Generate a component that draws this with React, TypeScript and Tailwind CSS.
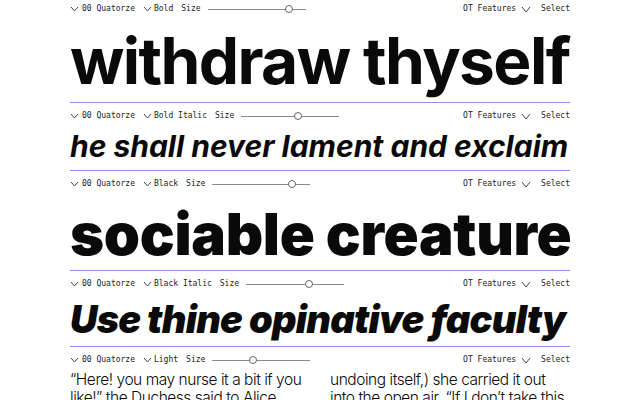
import React from "react";

const mono = { fontFamily: '"DejaVu Sans Mono", "Liberation Mono", monospace' };

function Chevron({ w = 7, h = 4 }: { w?: number; h?: number }) {
  return (
    <svg width={w + 2} height={h + 2} viewBox={`0 0 ${w + 2} ${h + 2}`} className="block">
      <path d={`M1 1 L${(w + 2) / 2} ${h + 1} L${w + 1} 1`} fill="none" stroke="#444" strokeWidth="1" />
    </svg>
  );
}

function Slider({ pos }: { pos: number }) {
  return (
    <div className="relative w-[98px] h-[10px] flex items-center">
      <div className="w-full h-px bg-[#8a8a8a]" />
      <div
        className="absolute top-[1px] w-[8px] h-[8px] rounded-full bg-white border border-[#666]"
        style={{ left: `${pos * 98 - 4}px` }}
      />
    </div>
  );
}

function Toolbar({ style, pos, first }: { style: string; pos: number; first?: boolean }) {
  return (
    <div
      className={`flex items-center justify-between h-[12px] text-[8px] text-[#222] ${first ? "mt-[3px]" : "mt-[7px]"}`}
      style={mono}
    >
      <div className="flex items-center">
        <Chevron />
        <span className="ml-[3px]">00 Quatorze</span>
        <span className="ml-[8px]"><Chevron /></span>
        <span className="ml-[2px]">{style}</span>
        <span className="ml-[8px]">Size</span>
        <span className="ml-[7px]"><Slider pos={pos} /></span>
      </div>
      <div className="flex items-center">
        <span>OT Features</span>
        <span className="ml-[5px]"><Chevron w={8} h={5} /></span>
        <span className="ml-[10px]">Select</span>
      </div>
    </div>
  );
}

function Rule() {
  return <div className="h-px bg-[#9a8de3]" />;
}

const head = { fontFamily: 'Inter, "Noto Sans", sans-serif' };

export default function App() {
  return (
    <div className="w-[640px] h-[400px] overflow-hidden bg-white text-[#0a0a0a]">
      <div className="ml-[70px] w-[500px]">
        <section>
          <Toolbar style="Bold" pos={0.83} first />
          <div
            className="h-[87px] pt-[14px] text-[64px] leading-[64px] font-bold tracking-[-0.025em] whitespace-nowrap"
            style={head}
          >
            withdraw thyself
          </div>
        </section>
        <Rule />
        <section>
          <Toolbar style="Bold Italic" pos={0.58} />
          <div
            className="h-[48px] pt-[9px] text-[30px] leading-[30px] font-bold italic whitespace-nowrap"
            style={head}
          >
            he shall never lament and exclaim
          </div>
        </section>
        <Rule />
        <section>
          <Toolbar style="Black" pos={0.81} />
          <div
            className="h-[80px] pt-[15px] text-[58px] leading-[58px] font-black tracking-[-0.005em] whitespace-nowrap"
            style={head}
          >
            sociable creature
          </div>
        </section>
        <Rule />
        <section>
          <Toolbar style="Black Italic" pos={0.64} />
          <div
            className="h-[56px] pt-[10px] text-[38px] leading-[38px] font-black italic tracking-[-0.02em] whitespace-nowrap"
            style={head}
          >
            Use thine opinative faculty
          </div>
        </section>
        <Rule />
        <section>
          <Toolbar style="Light" pos={0.41} />
          <div
            className="grid grid-cols-2 gap-[20px] pt-[5px] text-[15.5px] leading-[18px] font-light tracking-[-0.03em] whitespace-nowrap"
            style={head}
          >
            <p>
              “Here! you may nurse it a bit if you
              <br />
              like!” the Duchess said to Alice,
            </p>
            <p>
              undoing itself,) she carried it out
              <br />
              into the open air. “If I don’t take this
            </p>
          </div>
        </section>
      </div>
    </div>
  );
}
